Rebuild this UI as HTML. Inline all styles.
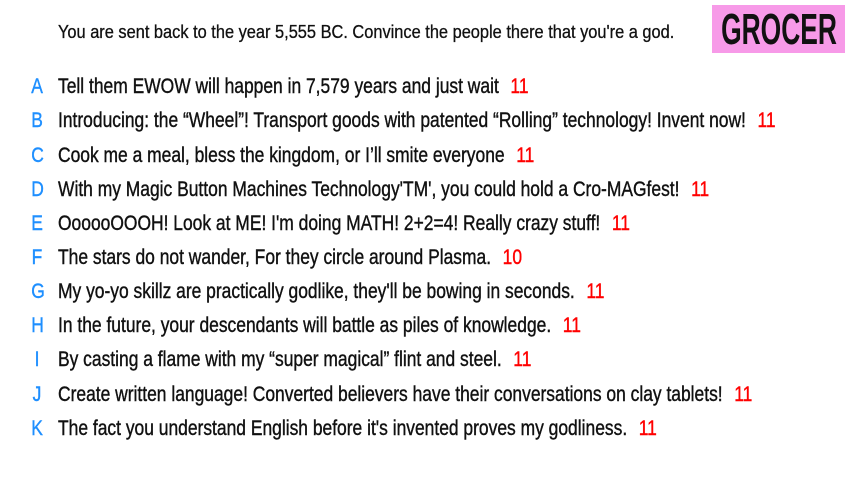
<!DOCTYPE html>
<html><head><meta charset="utf-8"><style>
body{margin:0;width:853px;height:480px;background:#fff;overflow:hidden;position:relative;font-family:"Liberation Sans",sans-serif;}
.h{position:absolute;left:58px;top:22px;font-size:18px;color:#111;white-space:nowrap;transform:scaleX(0.91);transform-origin:0 0;-webkit-text-stroke:0.3px #111;}
.g{position:absolute;left:712px;top:5px;width:133px;height:48px;background:#f79ae8;overflow:hidden;}
.g div{position:absolute;left:50%;top:0;line-height:50px;font-size:44px;font-weight:bold;color:#111;white-space:nowrap;transform:translateX(-50%) scaleX(0.6);}
.r{position:absolute;left:0;height:30px;line-height:30px;font-size:21px;white-space:nowrap;color:#111;width:853px;-webkit-text-stroke:0.4px currentColor;}
.r b{position:absolute;left:30px;width:14px;text-align:center;font-weight:normal;color:#1e8fff;transform:scaleX(0.83);}
.r span{position:absolute;left:58px;transform:scaleX(0.83);transform-origin:0 0;}
.r i{font-style:normal;color:#f00;margin-left:14px;}
</style></head><body>
<div class="h">You are sent back to the year 5,555 BC. Convince the people there that you're a god.</div>
<div class="g"><div>GROCER</div></div>
<div class="r" style="top:72px"><b>A</b><span>Tell them EWOW will happen in 7,579 years and just wait<i>11</i></span></div>
<div class="r" style="top:106px"><b>B</b><span>Introducing: the “Wheel”! Transport goods with patented “Rolling” technology! Invent now!<i>11</i></span></div>
<div class="r" style="top:141px"><b>C</b><span>Cook me a meal, bless the kingdom, or I’ll smite everyone<i>11</i></span></div>
<div class="r" style="top:175px"><b>D</b><span>With my Magic Button Machines Technology'TM', you could hold a Cro-MAGfest!<i>11</i></span></div>
<div class="r" style="top:209px"><b>E</b><span>OooooOOOH! Look at ME! I'm doing MATH! 2+2=4! Really crazy stuff!<i>11</i></span></div>
<div class="r" style="top:243px"><b>F</b><span>The stars do not wander, For they circle around Plasma.<i>10</i></span></div>
<div class="r" style="top:277px"><b>G</b><span>My yo-yo skillz are practically godlike, they'll be bowing in seconds.<i>11</i></span></div>
<div class="r" style="top:311px"><b>H</b><span>In the future, your descendants will battle as piles of knowledge.<i>11</i></span></div>
<div class="r" style="top:345px"><b>I</b><span>By casting a flame with my “super magical” flint and steel.<i>11</i></span></div>
<div class="r" style="top:380px"><b>J</b><span>Create written language! Converted believers have their conversations on clay tablets!<i>11</i></span></div>
<div class="r" style="top:414px"><b>K</b><span>The fact you understand English before it's invented proves my godliness.<i>11</i></span></div>
</body></html>
